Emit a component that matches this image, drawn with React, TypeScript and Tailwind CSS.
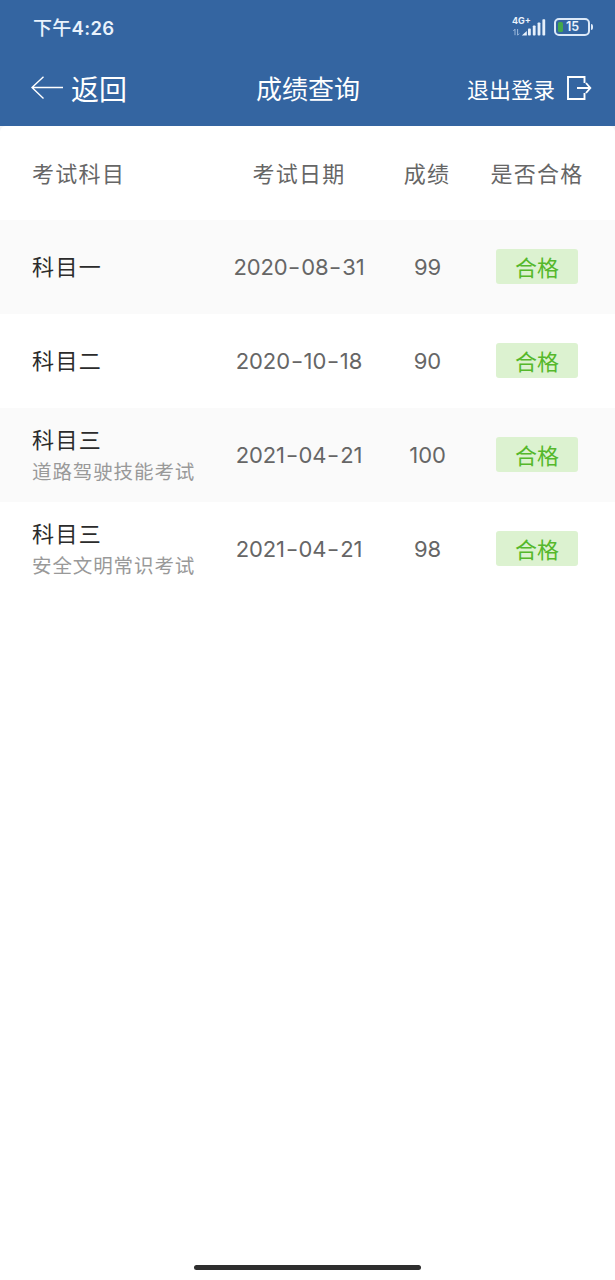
type Exam = {
  subject: string;
  detail?: string;
  date: string;
  score: number;
  result: string;
};

const EXAMS: Exam[] = [
  { subject: "科目一", date: "2020-08-31", score: 99, result: "合格" },
  { subject: "科目二", date: "2020-10-18", score: 90, result: "合格" },
  { subject: "科目三", detail: "道路驾驶技能考试", date: "2021-04-21", score: 100, result: "合格" },
  { subject: "科目三", detail: "安全文明常识考试", date: "2021-04-21", score: 98, result: "合格" },
];

const COLUMNS = "grid h-[94px] grid-cols-[214px_170px_86px_134px] items-center";

function SignalIcon() {
  return (
    <svg width="34" height="18" viewBox="0 0 34 18" fill="#e6f0fb">
      <path d="M3 17.2v-6L1.4 13M5.6 11v6.2L7.2 15.6" fill="none" stroke="#a9c3e3" strokeWidth="0.9" />
      <path d="M9.8 17.5l5-4.6v4.6z" />
      <rect x="16" y="10.6" width="2.8" height="7" rx="0.8" />
      <rect x="20.8" y="7.4" width="2.8" height="10.2" rx="0.8" />
      <rect x="25.6" y="4.4" width="2.8" height="13.2" rx="0.8" />
      <rect x="30.4" y="1.2" width="2.8" height="16.4" rx="0.8" />
    </svg>
  );
}

function StatusBar() {
  return (
    <div className="flex h-[54px] items-center justify-between pr-[22px] pl-[33px] text-[#e9f2fc]">
      <span className="text-[19px] leading-none font-medium tracking-[0.3px]">
        下午<span className="font-[Inter] text-[18.5px] font-semibold tracking-[0.3px]">4:26</span>
      </span>
      <div className="flex items-center gap-[8px]">
        <div className="relative h-[18px]">
          <SignalIcon />
          <span className="absolute -top-[2px] left-0 font-[Inter] text-[9px] leading-none font-bold">4G+</span>
        </div>
        <div className="flex items-center gap-px">
          <div className="flex h-[18px] w-[36px] items-center rounded-[5px] border-2 border-[#dce9f8] pl-[2px]">
            <span className="h-[10px] w-[5px] rounded-[1.5px] bg-[#43a84b]" />
            <span className="mt-px ml-[3px] font-[Inter] text-[12.5px] leading-none font-semibold">15</span>
          </div>
          <span className="h-[6px] w-[2px] rounded-r-full bg-[#dce9f8]" />
        </div>
      </div>
    </div>
  );
}

function NavBar() {
  return (
    <div className="grid h-[72px] grid-cols-[225px_103px_1fr] items-center pr-[23px] pb-1 pl-[31px] text-white">
      <div className="flex items-center gap-[8px]">
        <svg width="32" height="24" viewBox="0 0 32 24" fill="none" stroke="currentColor" strokeWidth="1.4">
          <path d="M12.5 0.8L1 11.5l11.5 11M1 11.5h31" />
        </svg>
        <span className="text-[28px] leading-none">返回</span>
      </div>
      <h1 className="text-[26px] leading-none font-normal whitespace-nowrap">成绩查询</h1>
      <div className="flex items-center justify-end gap-[11px]">
        <span className="text-[22px] leading-none">退出登录</span>
        <svg width="26" height="24" viewBox="0 0 26 24" fill="none" stroke="currentColor" strokeWidth="1.9">
          <path d="M18.5 7V1H2v22h16.5v-6M11 12h13M20 7l4.3 5-4.3 5" />
        </svg>
      </div>
    </div>
  );
}

function ExamDate({ date }: { date: string }) {
  const [year, month, day] = date.split("-");
  return (
    <div className="text-center font-[Inter] text-[22px] tracking-[-0.1px] text-[#666]">
      {year}
      <span className="mx-[1.8px] inline-block scale-x-125">-</span>
      {month}
      <span className="mx-[1.8px] inline-block scale-x-125">-</span>
      {day}
    </div>
  );
}

function ExamRow({ exam }: { exam: Exam }) {
  return (
    <div className={`${COLUMNS} even:bg-[#fafafa]`}>
      <div className="pl-8">
        <div className="-mt-[2px] mb-px text-[22px] leading-[31px] tracking-[1.4px] text-[#2b2b2b]">{exam.subject}</div>
        {exam.detail && (
          <div className="text-[19.5px] leading-[31px] tracking-[0.9px] text-[#999]">{exam.detail}</div>
        )}
      </div>
      <ExamDate date={exam.date} />
      <div className="pl-px text-center font-[Inter] text-[22px] tracking-[-0.1px] text-[#666]">{exam.score}</div>
      <div className="flex justify-center pb-0.5">
        <span className="flex h-[35px] w-[82px] items-center justify-center rounded-[3px] bg-[#dcf2d0] text-[22px] leading-none text-[#55b82b]">
          {exam.result}
        </span>
      </div>
    </div>
  );
}

export default function App() {
  return (
    <div className="flex h-[1280px] w-[615px] flex-col overflow-hidden bg-white font-['Noto_Sans_CJK_SC',sans-serif]">
      <header className="h-[126px] bg-[#3465a1]">
        <StatusBar />
        <NavBar />
      </header>
      <main className="flex-1 bg-[#f5f6f7]">
        <div className="h-full rounded-t-[6px] bg-white">
          <div className={`${COLUMNS} pb-0.5 text-center text-[22px] tracking-[1.3px] text-[#666]`}>
            <span className="pl-8 text-left">考试科目</span>
            <span>考试日期</span>
            <span>成绩</span>
            <span>是否合格</span>
          </div>
          {EXAMS.map((exam, i) => (
            <ExamRow key={i} exam={exam} />
          ))}
        </div>
      </main>
      <div className="flex justify-center pb-[10px]">
        <div className="h-[5px] w-[227px] rounded-full bg-[#2e2e2e]" />
      </div>
    </div>
  );
}
